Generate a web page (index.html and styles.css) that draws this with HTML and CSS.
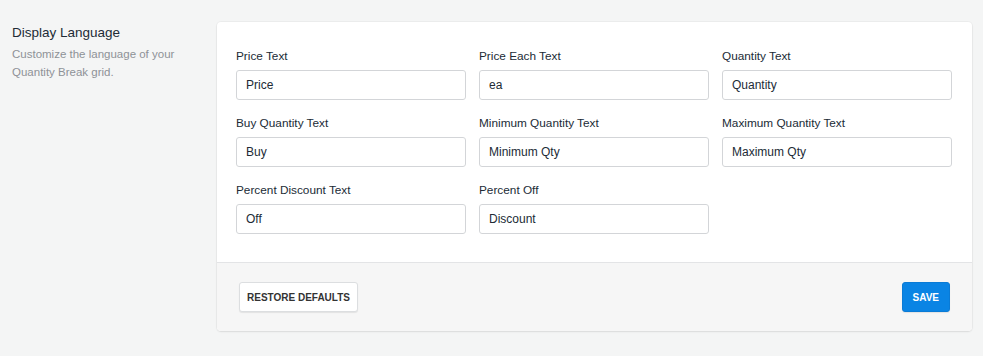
FILE: index.html
```html
<!DOCTYPE html>
<html lang="en">

<head>
    <meta charset="UTF-8">
    <meta name="viewport" content="width=device-width, initial-scale=1.0">
    <title>Display Language</title>
    <link rel="stylesheet" href="styles.css">
</head>

<body>
    <div class="layout">
        <div class="section-info">
            <h2>Display Language</h2>
            <p>Customize the language of your Quantity Break grid.</p>
        </div>
        <div class="card">
            <div class="card-body">
                <div class="field">
                    <label>Price Text</label>
                    <input type="text" value="Price">
                </div>
                <div class="field">
                    <label>Price Each Text</label>
                    <input type="text" value="ea">
                </div>
                <div class="field">
                    <label>Quantity Text</label>
                    <input type="text" value="Quantity">
                </div>
                <div class="field">
                    <label>Buy Quantity Text</label>
                    <input type="text" value="Buy">
                </div>
                <div class="field">
                    <label>Minimum Quantity Text</label>
                    <input type="text" value="Minimum Qty">
                </div>
                <div class="field">
                    <label>Maximum Quantity Text</label>
                    <input type="text" value="Maximum Qty">
                </div>
                <div class="field">
                    <label>Percent Discount Text</label>
                    <input type="text" value="Off">
                </div>
                <div class="field">
                    <label>Percent Off</label>
                    <input type="text" value="Discount">
                </div>
            </div>
            <div class="card-footer">
                <button class="btn">Restore Defaults</button>
                <button class="btn btn-primary">Save</button>
            </div>
        </div>
    </div>
</body>

</html>
```

FILE: styles.css
```css
body {
    font-family: "Liberation Sans", Arial, sans-serif;
    margin: 0;
    background-color: #f4f5f5;
    color: #212b36;
}

.layout {
    display: flex;
    padding: 22px 0 25px 0;
}

.section-info {
    width: 205px;
    padding-left: 12px;
}

.section-info h2 {
    font-size: 13.5px;
    font-weight: normal;
    margin: 2px 0 0 0;
    line-height: 18px;
    color: #212b36;
}

.section-info p {
    font-size: 11.5px;
    line-height: 18px;
    color: #8e9297;
    margin: 3px 0 0 0;
    width: 175px;
}

.card {
    width: 755px;
    background-color: #fff;
    border-radius: 4px;
    box-shadow: 0 0 0 1px rgba(0, 0, 0, 0.03), 0 1px 2px rgba(0, 0, 0, 0.08);
    overflow: hidden;
}

.card-body {
    display: grid;
    grid-template-columns: repeat(3, 230px);
    column-gap: 13px;
    row-gap: 15px;
    padding: 26px 20px 28px 19px;
}

.field label {
    display: block;
    font-size: 11.8px;
    line-height: 16px;
    color: #212b36;
    margin-bottom: 6px;
}

.field input {
    display: block;
    box-sizing: border-box;
    width: 100%;
    height: 30px;
    padding: 0 9px;
    font-family: inherit;
    font-size: 12px;
    color: #212b36;
    border: 1px solid #d3d5d8;
    border-radius: 3px;
    background-color: #fff;
}

.card-footer {
    display: flex;
    justify-content: space-between;
    align-items: center;
    height: 68px;
    padding: 0 22px;
    background-color: #f6f6f6;
    border-top: 1px solid #e3e4e6;
}

.btn {
    font-family: inherit;
    font-size: 10px;
    font-weight: bold;
    text-transform: uppercase;
    height: 30px;
    padding: 0 7px;
    border: 1px solid #dcdee0;
    border-radius: 3px;
    background-color: #fff;
    color: #333;
    box-shadow: 0 1px 1px rgba(0, 0, 0, 0.08);
    cursor: pointer;
}

.btn-primary {
    background-color: #0a84e4;
    border-color: #0a7bd6;
    color: #fff;
    padding: 0 10px;
}
```
